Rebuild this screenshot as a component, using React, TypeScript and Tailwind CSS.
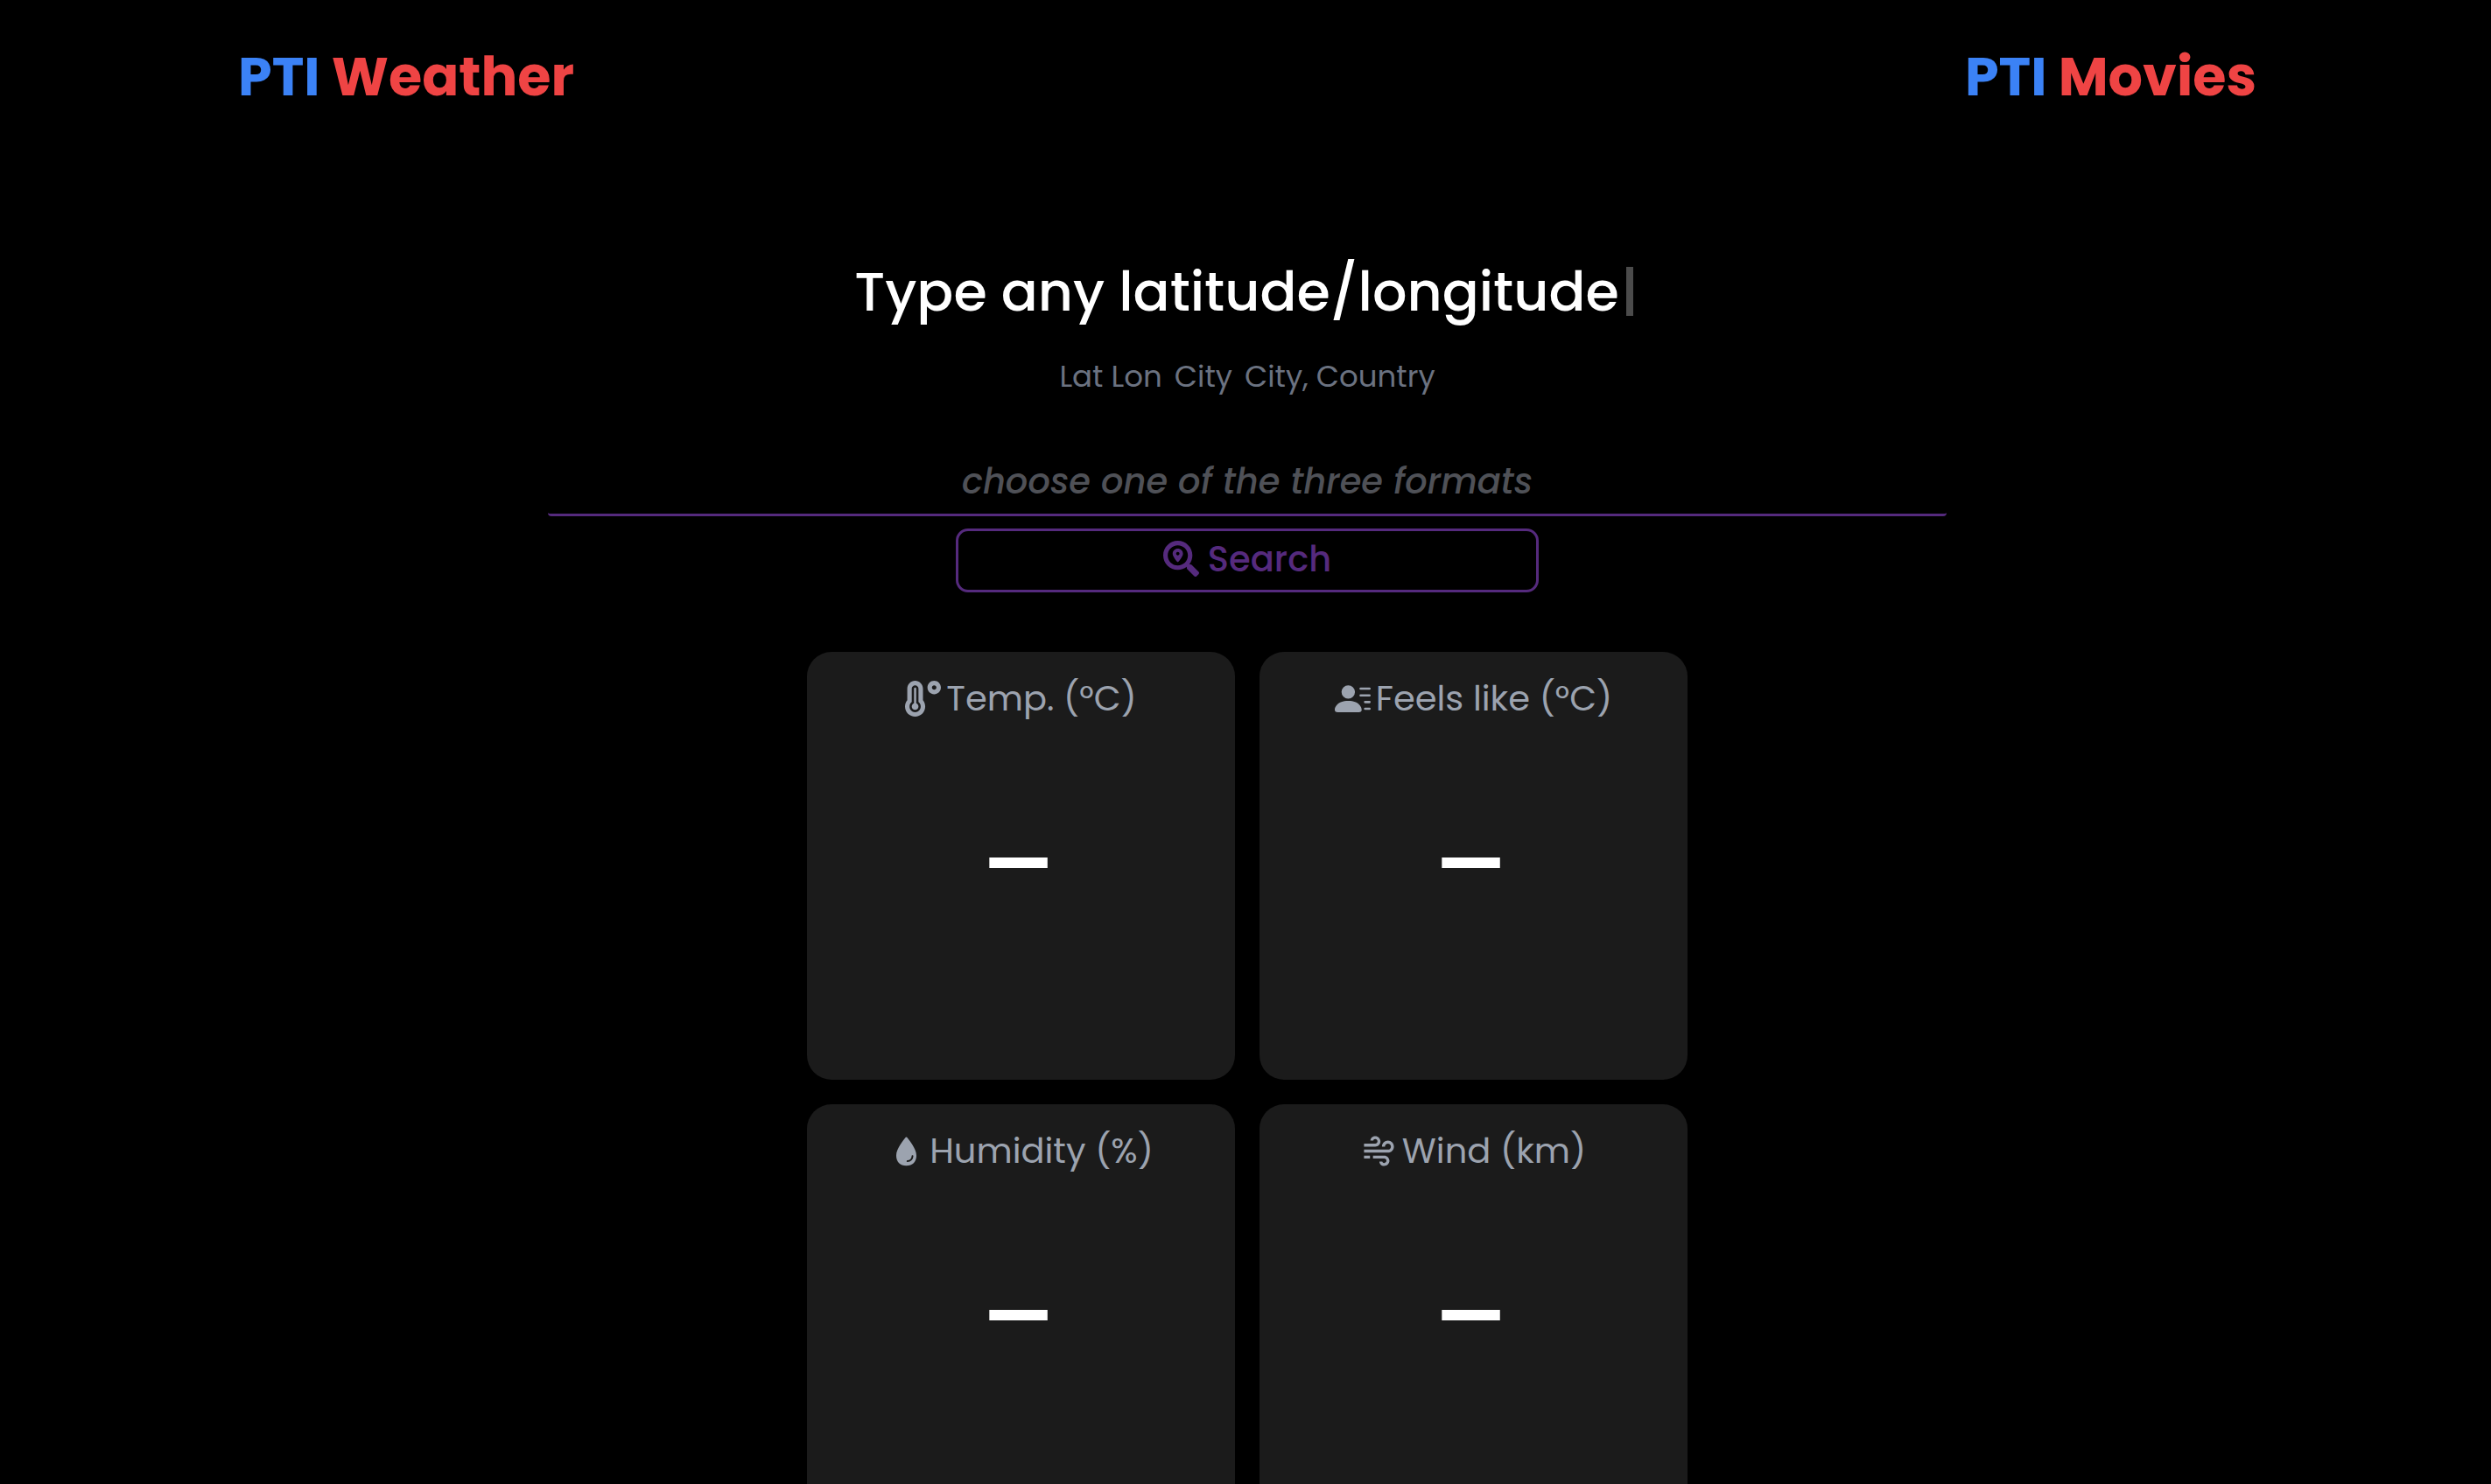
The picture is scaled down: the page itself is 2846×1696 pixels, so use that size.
import type { ComponentType } from "react";
import { BiWind } from "react-icons/bi";
import { BsPersonLinesFill } from "react-icons/bs";
import { FaSearchLocation, FaTemperatureHigh } from "react-icons/fa";
import { IoWater } from "react-icons/io5";

type Metric = { label: string; value: string; Icon: ComponentType<{ className?: string }> };

const metrics: Metric[] = [
  { label: "Temp. (°C)", value: "—", Icon: FaTemperatureHigh },
  { label: "Feels like (°C)", value: "—", Icon: BsPersonLinesFill },
  { label: "Humidity (%)", value: "—", Icon: IoWater },
  { label: "Wind (km)", value: "—", Icon: BiWind },
];

function Brand({ name }: { name: string }) {
  return (
    <a href="#" className="text-[62px] leading-[96px] font-bold text-[#ef4444]">
      <span className="text-[#3b82f6]">PTI</span> {name}
    </a>
  );
}

function MetricCard({ label, value, Icon }: Metric) {
  return (
    <section className="flex aspect-square flex-col rounded-[28px] bg-[#1b1b1b] pt-[23px]">
      <h2 className="flex items-center justify-center gap-1.5 text-[40px] leading-[60px] text-[#9ca3af]">
        <Icon className="size-[41px]" />
        {label}
      </h2>
      <p className="mt-[95px] pr-1.5 text-center text-[84px] leading-[128px] font-bold text-white">{value}</p>
    </section>
  );
}

export default function App() {
  return (
    <div className="h-screen overflow-hidden bg-black pl-1 font-['Poppins','Inter',sans-serif]">
      <header className="mx-auto flex w-full max-w-[2306px] items-center justify-between pt-10">
        <Brand name="Weather" />
        <Brand name="Movies" />
      </header>

      <main className="flex flex-col items-center">
        <h1 className="mt-[150px] text-[62px] leading-[96px] font-medium text-white">
          Type any latitude/longitude
          <span className="mx-2 inline-block h-[56px] w-2 translate-y-1.5 bg-[#4b4b4b]" aria-hidden="true" />
        </h1>

        <ul className="mt-[22px] flex gap-3.5 text-[34px] leading-[52px] text-[#6b7280]">
          <li>Lat Lon</li>
          <li>City</li>
          <li>City, Country</li>
        </ul>

        <form className="mt-[52px] flex w-full max-w-[1598px] flex-col items-center gap-3.5" onSubmit={(e) => e.preventDefault()}>
          <input
            type="text"
            aria-label="Location"
            placeholder="choose one of the three formats"
            className="h-[82px] w-full rounded-[4px] border-b-[3px] border-[#552a7d] bg-black pt-1 text-center text-[40px] font-medium text-white italic outline-none placeholder:text-[#4f5157]"
          />
          <button
            type="submit"
            className="flex h-[73px] w-5/12 items-center justify-center gap-2.5 rounded-[14px] border-[3px] border-[#552a7d] pb-1 text-[40px] font-medium text-[#552a7d]"
          >
            <FaSearchLocation className="size-[41px]" />
            Search
          </button>
        </form>

        <div className="mt-[68px] grid w-full max-w-[1006px] grid-cols-2 gap-7">
          {metrics.map((metric) => (
            <MetricCard key={metric.label} {...metric} />
          ))}
        </div>
      </main>
    </div>
  );
}
